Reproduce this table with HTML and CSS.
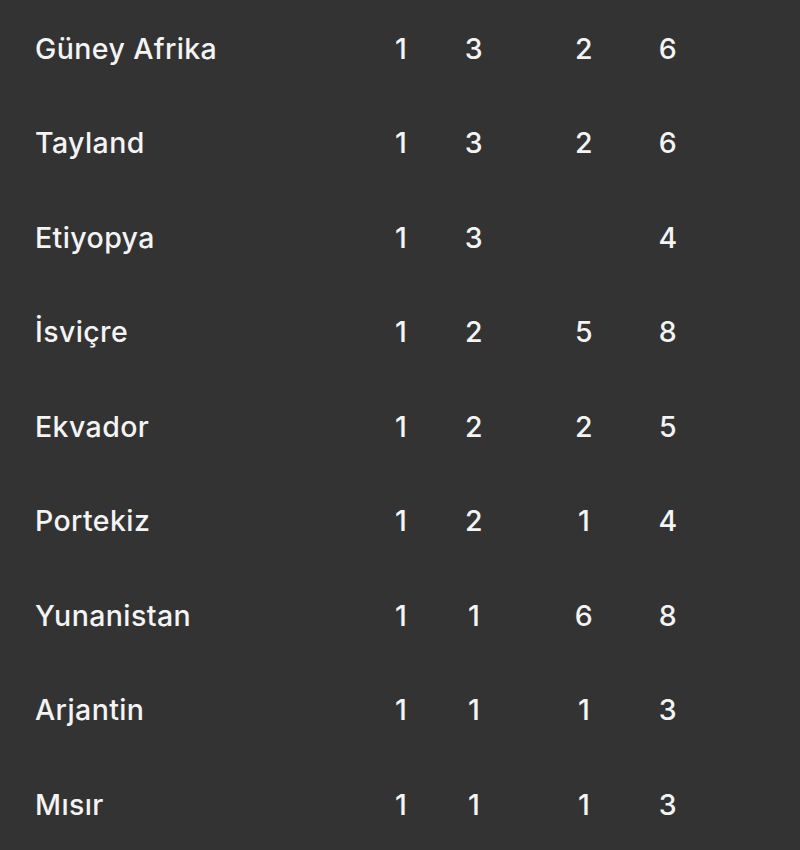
FILE: index.html
```html
<!DOCTYPE html>
<html lang="tr">
<head>
<meta charset="utf-8">
<link rel="stylesheet" href="styles.css">
</head>
<body>
<div class="table">
  <div class="row"><span class="name">Güney Afrika</span><span class="n">1</span><span class="n">3</span><span class="n">2</span><span class="n">6</span></div>
  <div class="row"><span class="name">Tayland</span><span class="n">1</span><span class="n">3</span><span class="n">2</span><span class="n">6</span></div>
  <div class="row"><span class="name">Etiyopya</span><span class="n">1</span><span class="n">3</span><span class="n"></span><span class="n">4</span></div>
  <div class="row"><span class="name">İsviçre</span><span class="n">1</span><span class="n">2</span><span class="n">5</span><span class="n">8</span></div>
  <div class="row"><span class="name">Ekvador</span><span class="n">1</span><span class="n">2</span><span class="n">2</span><span class="n">5</span></div>
  <div class="row"><span class="name">Portekiz</span><span class="n">1</span><span class="n">2</span><span class="n">1</span><span class="n">4</span></div>
  <div class="row"><span class="name">Yunanistan</span><span class="n">1</span><span class="n">1</span><span class="n">6</span><span class="n">8</span></div>
  <div class="row"><span class="name">Arjantin</span><span class="n">1</span><span class="n">1</span><span class="n">1</span><span class="n">3</span></div>
  <div class="row"><span class="name">Mısır</span><span class="n">1</span><span class="n">1</span><span class="n">1</span><span class="n">3</span></div>
</div>
</body>
</html>
```
FILE: styles.css
```css
html, body {
  margin: 0;
  padding: 0;
  background: #333333;
}
body {
  width: 800px;
  height: 850px;
  overflow: hidden;
  font-family: Inter, "Open Sans", sans-serif;
  font-weight: 500;
  font-size: 28.5px;
  letter-spacing: 0.4px;
  color: #f4f4f4;
}
.table {
  display: flex;
  flex-direction: column;
  padding-top: 1px;
}
.row {
  display: grid;
  grid-template-columns: 331px 70px 76px 144px 24px;
  align-items: center;
  height: 94.5px;
  padding-left: 35px;
}
.n {
  text-align: center;
}
```
